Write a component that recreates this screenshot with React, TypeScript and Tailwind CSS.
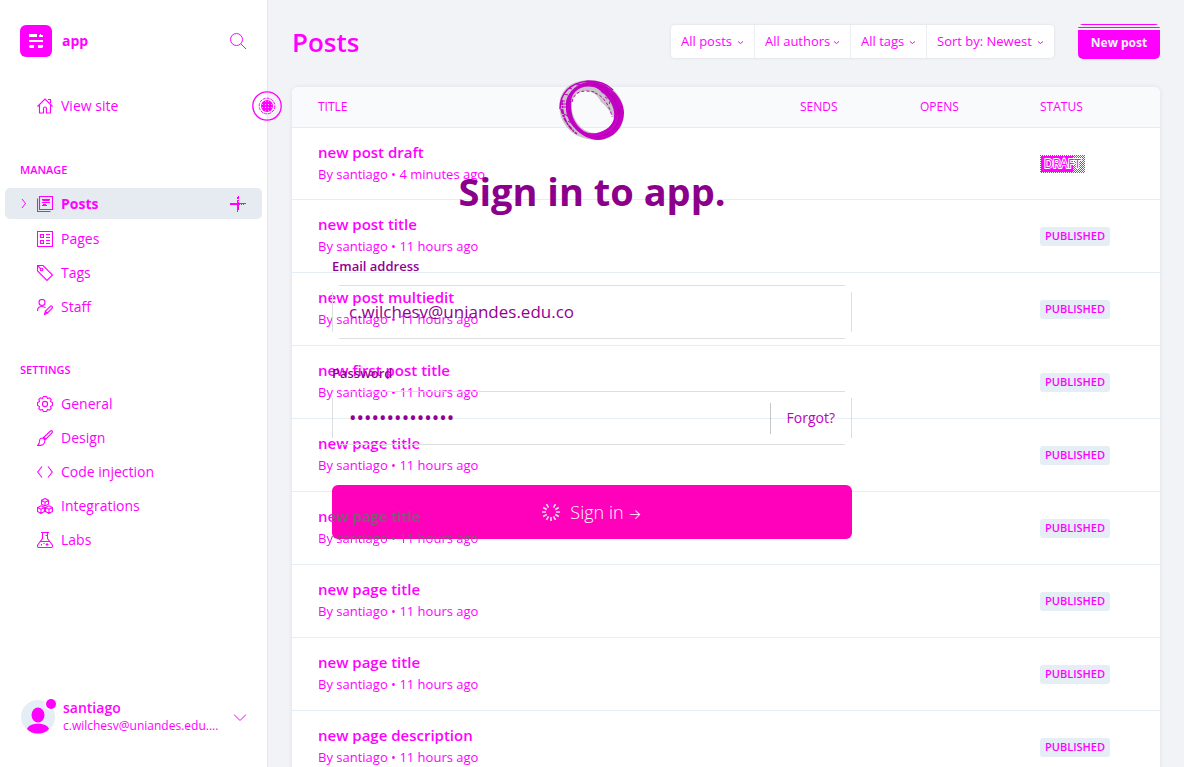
import type { ReactNode } from "react";

const ink = "text-[#ff00ff]";

function Icon({ children }: { children: ReactNode }) {
  return (
    <svg viewBox="0 0 16 16" className="size-4 shrink-0" fill="none" stroke="currentColor" strokeWidth="1.1" aria-hidden="true">
      {children}
    </svg>
  );
}

const icons = {
  home: <Icon><path d="M.5 8.500 8 1l7.500 7.500M2.500 7v8h4v-4.500a1.500 1.500 0 0 1 3 0V15h4V7M11 1.500h2.500V5" /></Icon>,
  posts: <Icon><path d="M2.500.5h13v13h-13zM.5 2.500v13h13M5 3.500h8M5.500 4.500h7M5 6.500h8M5 9.500h5M6 8.500h3" /></Icon>,
  pages: <Icon><path d="M.5.500h15v15H.5zM3.500 3.500h3v3h-3zM3.500 9.500h3v3h-3zM9 3.500h4M9 6.500h4M9 9.500h4M9 12.500h4" /></Icon>,
  tags: <Icon><path d="M.5.500H6L15.500 10 10 15.500.5 6z" /><circle cx="4.500" cy="4.500" r="1.300" /><path d="m.5.500 3 3" /></Icon>,
  staff: <Icon><circle cx="5" cy="3.500" r="3" /><path d="M.5 12C.5 8.500 2 7.500 5 7.500c1.500 0 2.500.3 3.500 1.500M7.500 15.500l.8-3.200 5-5c1.200-1 2.800.6 1.900 1.900l-5 5zM8.500 12.500l2 2" /></Icon>,
  general: (
    <Icon>
      <circle cx="8" cy="8" r="2.600" />
      <path d="M5.500 2.500 6.500.500h3l1 2 2-.700 1.700 1.700-.7 2 2 1v3l-2 1 .7 2-1.700 1.700-2-.700-1 2h-3l-1-2-2 .700-1.700-1.700.7-2-2-1v-3l2-1-.7-2 1.700-1.700z" />
    </Icon>
  ),
  design: <Icon><path d="m6 8 7.500-7c1.200-.9 2.500.4 1.600 1.600L8 10zM6 8c-2 0-3.500 1-3.500 3S2 14.500.5 15.500c4 .2 7.500-.500 7.500-5.500M7 7.500l2 1.800" /></Icon>,
  code: <Icon><path d="M5 2.500.7 8 5 13.500M11 2.500 15.300 8 11 13.500" /></Icon>,
  integrations: <Icon><path d="m8 .5 3.500 1.800v3.900L8 8 4.500 6.200V2.300zM4.500 2.500 8 4.200l3.500-1.700M8 4.200V8M4 7.800l3.500 1.700v4L4 15.500.5 13.500v-4zM.5 9.500 4 11.200l3.500-1.700M4 11.200v4M12 7.800l3.500 1.700v4L12 15.500l-3.500-2v-4zM8.500 9.500l3.500 1.700 3.500-1.700M12 11.200v4" /></Icon>,
  labs: <Icon><path d="M4 .5h8M5.500.5v6L1 12.500c-1 1.500-.5 3 1 3h12c1.500 0 2-1.500 1-3l-4.500-6v-6M8.500 3.500h2M3.500 9.500h9M4.500 12v1.500M7 11v1M10 11v3M8.700 12.500h2.800" /></Icon>,
};

type NavProps = { icon: ReactNode; children: ReactNode };

function NavItem({ icon, children }: NavProps) {
  return (
    <a href="#" className="flex h-[34px] items-center gap-2 pl-[37px] text-sm">
      {icon}
      {children}
    </a>
  );
}

function Sidebar() {
  return (
    <aside className="flex w-[268px] shrink-0 flex-col border-r border-[#e3e6ec] bg-white">
      <div className="flex items-center pt-[25px] pr-[21px] pl-5">
        <span className="grid size-8 place-items-center rounded-md bg-[#ff00ff]">
          <svg viewBox="0 0 14 14" className="size-[14px]" fill="#fff" aria-hidden="true">
            <path d="M0 0h8v3H0zM10 1h1V0h1v1h2v2h-4zM0 6h14v2H0zM0 12l1-1h4v3H1l-1-1zM9 11h5v2l-1 1H9z" />
          </svg>
        </span>
        <span className="ml-[10px] text-sm font-bold">app</span>
        <button type="button" aria-label="Search" className="ml-auto">
          <svg viewBox="0 0 16 16" className="size-4" fill="none" stroke="currentColor" aria-hidden="true">
            <circle cx="6.500" cy="6.500" r="6" />
            <path d="m11 11 5 5" />
          </svg>
        </button>
      </div>
      <nav className="pt-8">
        <div className="flex items-center">
          <div className="grow"><NavItem icon={icons.home}>View site</NavItem></div>
          <button type="button" aria-label="Preview" className="relative z-30 -mr-[15px] size-[30px]">
            <svg viewBox="0 0 30 30" fill="none" stroke="currentColor" aria-hidden="true">
              <circle cx="15" cy="15" r="14.200" strokeWidth="1.300" />
              <circle cx="15" cy="15" r="7.800" strokeDasharray="3 1" />
              <circle cx="15" cy="15" r="6" fill="currentColor" stroke="none" />
              <path d="M13.500 10v10M16.500 10v10M10 13.500h10M10 16.500h10" stroke="#fff" strokeWidth=".6" strokeDasharray="1 2" />
            </svg>
          </button>
        </div>
        <h2 className="mt-[39px] pl-5 text-[11px] leading-4 font-semibold">MANAGE</h2>
        <div className="mx-[5px] mt-[10px] mb-[3px] flex h-[31px] items-center rounded-[5px] bg-[#e6eaf1] pr-4 pl-4">
          <svg viewBox="0 0 5 9" className="mr-[11px] h-[9px] w-[5px]" fill="none" stroke="currentColor" aria-hidden="true">
            <path d="m1 0 3.500 4.500L1 9" />
          </svg>
          <a href="#" className="flex items-center gap-2 text-sm font-bold">{icons.posts}Posts</a>
          <button type="button" aria-label="New post" className="ml-auto">
            <svg viewBox="0 0 16 16" className="size-4" fill="none" stroke="currentColor" aria-hidden="true">
              <path d="M0 7.500h9M8.500 0v3M8.500 4v1M8.500 6v8M7.500 1v2M7.500 4v12M9 7.500h7" />
              <path d="M0 8.500h9" />
              <path d="M9 8.500h6" strokeDasharray="1 1" />
            </svg>
          </button>
        </div>
        <NavItem icon={icons.pages}>Pages</NavItem>
        <NavItem icon={icons.tags}>Tags</NavItem>
        <NavItem icon={icons.staff}>Staff</NavItem>
        <h2 className="mt-[38px] mb-[9px] pl-5 text-[11px] leading-4 font-semibold">SETTINGS</h2>
        <NavItem icon={icons.general}>General</NavItem>
        <NavItem icon={icons.design}>Design</NavItem>
        <NavItem icon={icons.code}>Code injection</NavItem>
        <NavItem icon={icons.integrations}>Integrations</NavItem>
        <NavItem icon={icons.labs}>Labs</NavItem>
      </nav>
      <button type="button" className="mt-auto mb-8 flex items-center pr-[21px] pl-[21px] text-left">
        <svg viewBox="0 0 36 36" className="size-9 shrink-0" aria-hidden="true">
          <circle cx="17" cy="18" r="17" fill="#e5eef5" />
          <ellipse cx="17" cy="16" rx="6.500" ry="7.500" fill="#f0f" />
          <path d="M6 30c2-7 20-7 22 0-5 6-17 6-22 0z" fill="#f0f" />
          <circle cx="30" cy="5" r="6.500" fill="#fff" />
          <circle cx="30" cy="5" r="5" fill="#f0f" />
        </svg>
        <span className="ml-[6px] flex min-w-0 grow flex-col">
          <span className="text-sm leading-[18px] font-semibold">santiago</span>
          <span className="text-[12px] leading-[18px]">c.wilchesv@uniandes.edu....</span>
        </span>
        <svg viewBox="0 0 12 7" className="h-[7px] w-3 shrink-0" fill="none" stroke="currentColor" aria-hidden="true">
          <path d="m0 .5 6 6 6-6" />
        </svg>
      </button>
    </aside>
  );
}

const filters = [
  { id: "type", label: "All posts", width: "w-[84px]" },
  { id: "author", label: "All authors", width: "w-[96px]" },
  { id: "tag", label: "All tags", width: "w-[76px]" },
  { id: "order", label: "Sort by: Newest", width: "w-[127px]" },
];

function Filters() {
  return (
    <div className="flex h-[33px] divide-x divide-[#eceef2] rounded-[4px] bg-white shadow-[0_0_3px_rgba(0,0,0,0.1)]">
      {filters.map((f) => (
        <div key={f.id} className={`relative ${f.width}`}>
          <select id={f.id} aria-label={f.label} className="h-full w-full appearance-none bg-transparent pl-[10px] text-[13px]">
            <option>{f.label}</option>
          </select>
          <svg viewBox="0 0 5 3" className="pointer-events-none absolute top-4 right-[11px] h-[3px] w-[5px]" fill="none" stroke="currentColor" aria-hidden="true">
            <path d="m0 .5 2.500 2 2.500-2" />
          </svg>
        </div>
      ))}
    </div>
  );
}

const rows = [
  { title: "new post draft", when: "4 minutes ago", draft: true },
  { title: "new post title", when: "11 hours ago" },
  { title: "new post multiedit", when: "11 hours ago" },
  { title: "new first post title", when: "11 hours ago" },
  { title: "new page title", when: "11 hours ago" },
  { title: "new page title", when: "11 hours ago", covered: true },
  { title: "new page title", when: "11 hours ago" },
  { title: "new page title", when: "11 hours ago" },
  { title: "new page description", when: "11 hours ago" },
];

const coveredText =
  "relative z-20 bg-[#ff00ff] bg-[linear-gradient(#6b6b6b,#6b6b6b)] bg-no-repeat bg-clip-text text-transparent bg-[position:14px_0]";

function PostsTable() {
  return (
    <table className="w-full table-fixed border-separate border-spacing-0 rounded-t-md bg-white text-left shadow-[0_0_5px_rgba(0,0,0,0.08)]">
      <thead>
        <tr className="h-[41px] text-[12px]">
          <th className="rounded-tl-md border-b border-[#e5ecf2] bg-[#f9fafc] pl-[26px] font-medium">TITLE</th>
          <th className="w-[120px] border-b border-[#e5ecf2] bg-[#f9fafc] font-medium">SENDS</th>
          <th className="w-[120px] border-b border-[#e5ecf2] bg-[#f9fafc] font-medium">OPENS</th>
          <th className="w-[120px] rounded-tr-md border-b border-[#e5ecf2] bg-[#f9fafc] font-medium">STATUS</th>
        </tr>
      </thead>
      <tbody>
        {rows.map((r, i) => (
          <tr key={i} className="h-[73px] first:h-[72px]">
            <td className="border-b border-[#e5edf5] pb-[2px] pl-[26px]">
              <h3 className={`w-fit text-[15px] leading-[22px] font-semibold ${r.covered ? `${coveredText} bg-[size:300px_30px]` : ""}`}>
                {r.title}
              </h3>
              <p className={`w-fit text-[13px] leading-[22px] ${r.covered ? `${coveredText} bg-[size:300px_12px]` : ""}`}>
                By <span className="font-medium">santiago</span> • {r.when}
              </p>
            </td>
            <td className="border-b border-[#e5edf5]" />
            <td className="border-b border-[#e5edf5]" />
            <td className="border-b border-[#e5edf5]">
              {r.draft ? (
                <span className="flex h-[18px] w-[45px] items-center justify-center bg-[repeating-conic-gradient(#fff_0_25%,#f0f_0_50%)] bg-[size:2px_2px]">
                  <span className="h-4 w-[43px] bg-[linear-gradient(to_right,#f0f_75%,transparent_75%)] text-center text-[12px] leading-4 font-medium">
                    <span className="[-webkit-text-stroke:2px_#fff] [paint-order:stroke_fill]">DRAFT</span>
                  </span>
                </span>
              ) : (
                <span className="flex h-[19px] w-[70px] items-center justify-center rounded-[3px] bg-[#e5edf5] text-[11px] font-semibold">PUBLISHED</span>
              )}
            </td>
          </tr>
        ))}
      </tbody>
    </table>
  );
}

function RingLogo() {
  return (
    <svg viewBox="0 0 66 60" className="h-[60px] w-[66px]" aria-hidden="true">
      <path
        fillRule="evenodd"
        fill="#c9c4c9"
        d="M.5 23C2 8 14 0 31 .3 40 0 48 4 54 9c7 7 11 14 11 24 0 14-10 27-26 27C24 60 12 55 5 43 1 36 0 30 .5 23ZM13 23c-1 7 1 12 4 18 4 8 12 12 20 12 9-1 16-6 18-14-3-7-8-13-13-17-3-6-7-11-15-11C19 11 14 15 13 23Z"
      />
      <path
        fillRule="evenodd"
        fill="#c400c4"
        d="M7 22C9 11 20 2 32 1.500 48 2 64 16 65 32c0 15-10 27-26 28C22 59 9 44 7 31Zm5 2c0 11 3 18 8 24 5 5 12 6 18 5 9-2 16-8 17-15 2-12-7-23-16-29-7-4-17-3-23 3-3 3-4 7-4 12Z"
      />
      <g fill="none" stroke="#c000c0">
        <path d="M1 29C1 13 11 3 29 1c10 0 19 3 25 9" strokeWidth="1.500" />
        <path d="M3 20C3 35 7 46 18 54M2 29c3 11 6 15 12 21" strokeWidth="1.500" strokeDasharray="5 1 2 1" />
        <path d="M2 21h4M2 24h5M3 27h4M5 14l4 1M10 8l3 1M17 5l5-1M5 34l4 2M9 41l3 2" />
        <path d="M36 13c9 3 15 14 17 24M42 11l3 4M46 17l3 2M51 21l-1 4M13 22c2-8 6-11 15-11l8 1" strokeDasharray="3 2" />
      </g>
      <path d="M10 30c2 14 13 26 28 26 14 0 22-10 22-23C59 20 47 7 34 4" fill="none" stroke="#ac00ac" strokeWidth="1" />
      <path d="M13 37c5 12 15 19 26 18 12-1 19-10 20-20" fill="none" stroke="#dc00dc" strokeWidth="1.200" />
    </svg>
  );
}

function Field({ children }: { children: ReactNode }) {
  return (
    <div className="relative flex h-[54px] items-center px-[17px]">
      <span className="pointer-events-none absolute inset-x-[7px] inset-y-0 border-y border-[#dedede]" />
      <span className="pointer-events-none absolute inset-x-0 inset-y-[7px] border-x border-[#dedede]" />
      {children}
    </div>
  );
}

function SignIn() {
  return (
    <div className="absolute inset-0 z-10 flex justify-center">
      <form className="mt-20 flex w-[520px] flex-col text-[#930093]" onSubmit={(e) => e.preventDefault()}>
        <div className="flex justify-center"><RingLogo /></div>
        <h1 className="mt-6 text-center text-[38px] leading-[54px] font-bold text-[#8b008b]">Sign in to app.</h1>
        <label htmlFor="email" className="mt-[38px] mb-[9px] text-[13px] leading-5 font-semibold">Email address</label>
        <Field>
          <input id="email" type="email" defaultValue="c.wilchesv@uniandes.edu.co" className="w-full bg-transparent text-[17px] outline-none" />
        </Field>
        <label htmlFor="password" className="mt-6 mb-2 text-[13px] leading-5 font-semibold">Password</label>
        <Field>
          <input id="password" type="password" defaultValue="abcdefghijklmn" className="min-w-0 grow bg-transparent text-[20px] outline-none" />
          <button type="button" className="h-[31px] border-l border-[#c6c6c6] pl-4 text-sm text-[#c000c0]">Forgot?</button>
        </Field>
        <button type="submit" className="mt-10 flex h-[54px] items-center justify-center gap-[10px] rounded-md bg-[#ff00bb] text-[18px] font-light text-white">
          <svg viewBox="0 0 18 18" className="size-[18px]" stroke="#e8e0e8" strokeWidth="1.600" aria-hidden="true">
            <path d="M9 14v4M0 9h4M14 9h4M4.500 1.200l2 3.500M13.500 1.200l-2 3.500M1.200 4.500l3.500 2M16.800 4.500l-3.500 2M1.200 13.500l3.500-2M16.800 13.500l-3.500-2M4.500 16.800l2-3.500M13.500 16.800l-2-3.500" />
            <path d="M9 0v4" stroke="#f0f" />
          </svg>
          <span>Sign in <span className="font-['Inter',sans-serif] text-sm">→</span></span>
        </button>
      </form>
    </div>
  );
}

export default function App() {
  return (
    <div className={`relative flex h-screen overflow-hidden bg-[#f2f3f7] font-['Open_Sans',sans-serif] ${ink}`}>
      <Sidebar />
      <main className="min-w-0 grow px-6">
        <header className="flex h-[87px] items-start pt-6">
          <h1 className="text-[26px] leading-9 font-semibold">Posts</h1>
          <div className="mt-px ml-auto"><Filters /></div>
          <button
            type="button"
            className="ml-6 h-[35px] w-[82px] rounded-[5px] bg-[linear-gradient(#f0f_1px,#f2f3f7_1px_3px,#f0f_3px_4px,#f2f3f7_4px_6px,#f0f_6px)] pt-[2px] text-[12px] font-bold text-[#f2f3f7]"
          >
            New post
          </button>
        </header>
        <PostsTable />
      </main>
      <SignIn />
    </div>
  );
}
